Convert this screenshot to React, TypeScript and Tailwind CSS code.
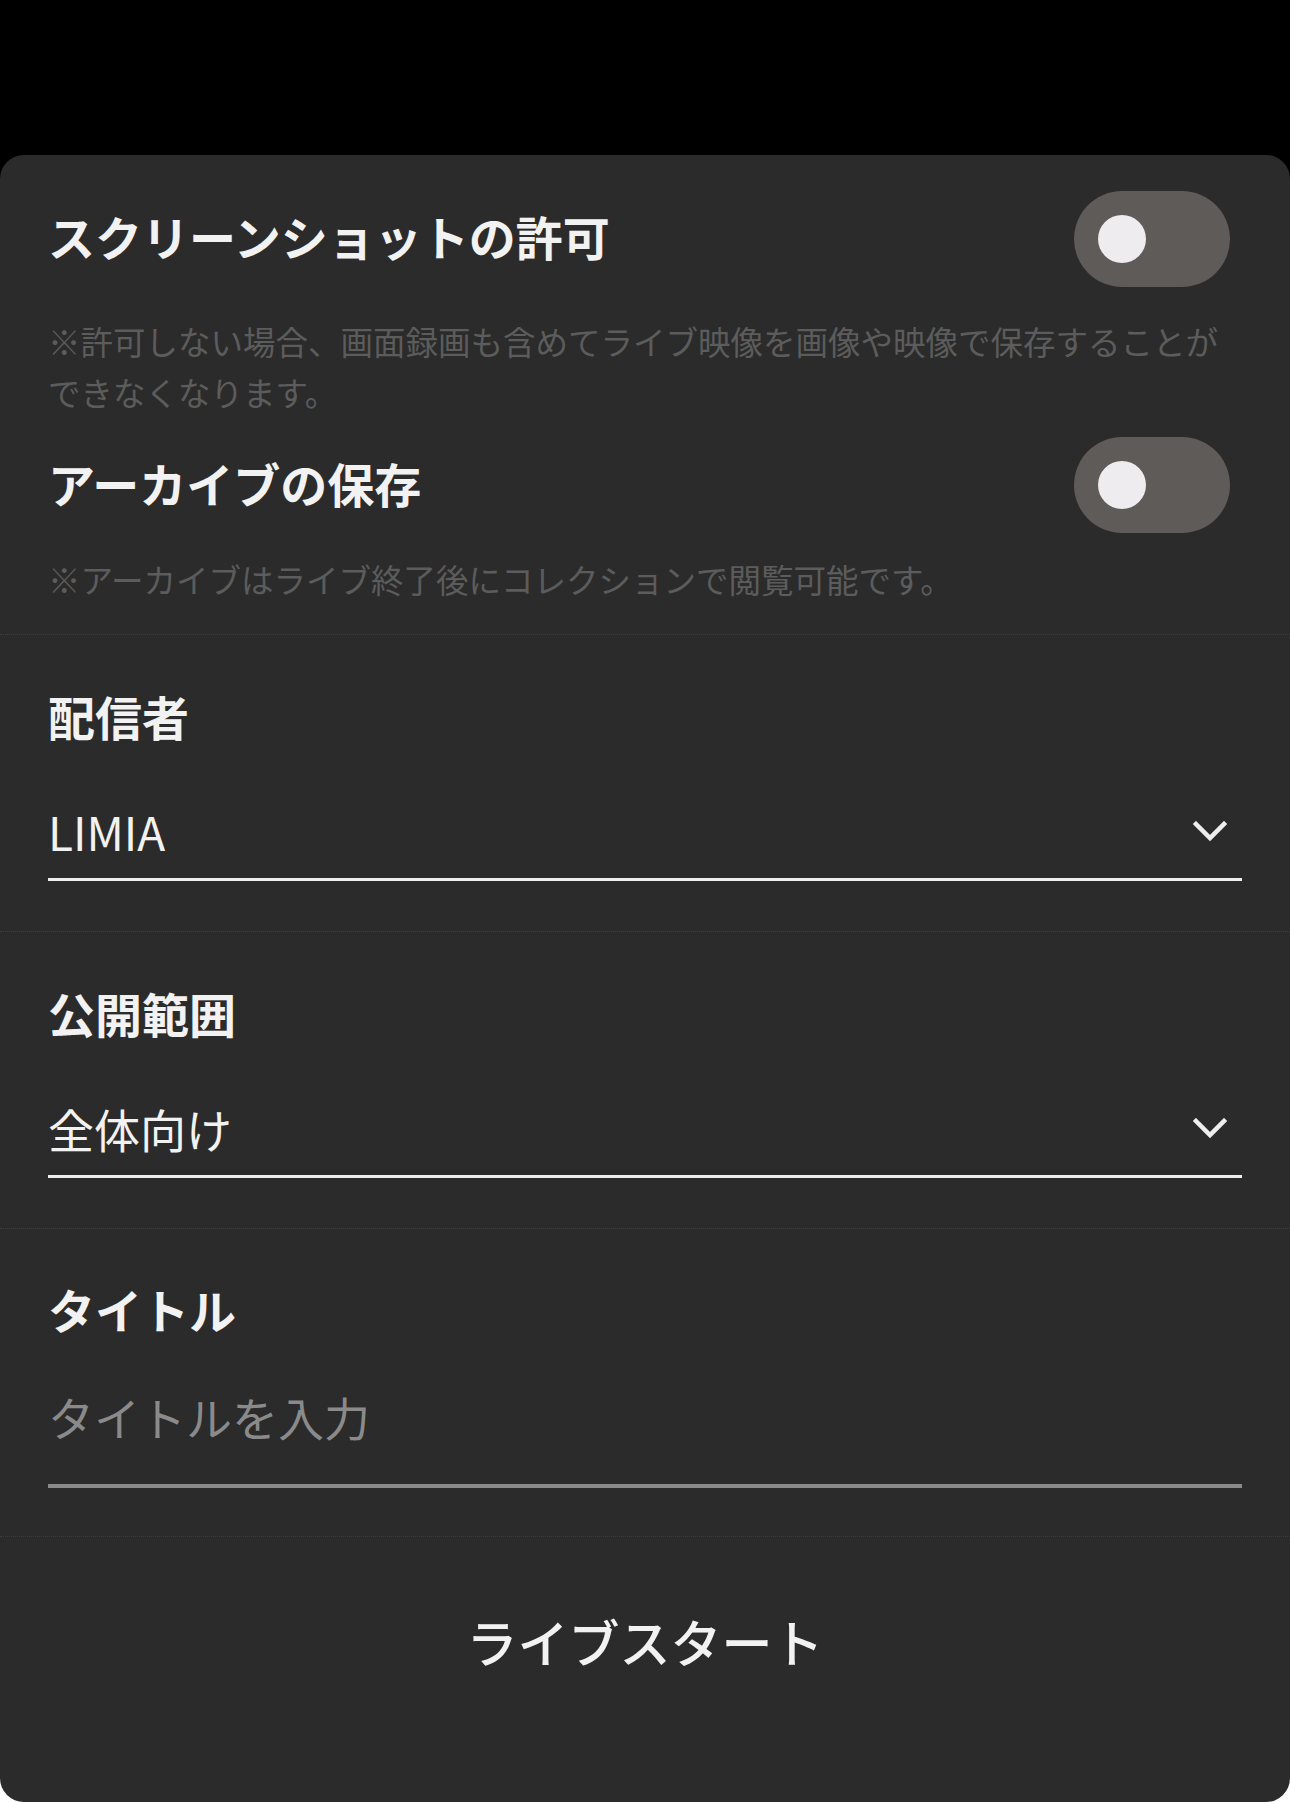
import React from "react";

// Live start settings sheet
const Divider = () => <div className="border-t border-dotted border-[#3d3d3d]" />;

function Toggle() {
  return (
    <div className="w-[156px] h-[96px] rounded-full bg-[#5e5b59] flex items-center pl-[24px] mr-[12px] shrink-0">
      <div className="w-[48px] h-[48px] rounded-full bg-[#eeecee]" />
    </div>
  );
}

function Chevron() {
  return (
    <svg width="34" height="21" viewBox="0 0 34 21" className="mr-[15px]">
      <polyline points="3,3 17,17 31,3" fill="none" stroke="#eeeeee" strokeWidth="4.5" strokeLinecap="square" />
    </svg>
  );
}

function SelectField({ label, value }: { label: string; value: string }) {
  return (
    <section className="px-[48px] pt-[51px] pb-[50px]">
      <h2 className="text-[47px] leading-[60px] font-bold text-[#f2f2f2]">{label}</h2>
      <div className="mt-[55px] flex items-center justify-between pb-[17px] border-b-[3px] border-[#eeeeee]">
        <span className="text-[46px] leading-[60px] text-[#f2f2f2]">{value}</span>
        <Chevron />
      </div>
    </section>
  );
}

export default function App() {
  return (
    <div className="h-[1802px] flex flex-col bg-[linear-gradient(to_bottom,#000_90%,#fff_90%)] font-['Noto_Sans_CJK_JP','Noto_Sans',sans-serif]">
      <div className="mt-[155px] flex-1 rounded-[24px] bg-[#2b2b2b] flex flex-col">
        <section className="px-[48px] pt-[36px] pb-[30px]">
          <div className="flex items-center justify-between">
            <h2 className="-mt-[6px] text-[47px] leading-[60px] font-bold text-[#f2f2f2]">スクリーンショットの許可</h2>
            <Toggle />
          </div>
          <p className="mt-[28px] w-[1180px] text-[32.5px] leading-[51px] text-[#5c5c5c]">
            ※許可しない場合、画面録画も含めてライブ映像を画像や映像で保存することができなくなります。
          </p>
          <div className="mt-[20px] flex items-center justify-between">
            <h2 className="-mt-[4px] text-[47px] leading-[60px] font-bold text-[#f2f2f2]">アーカイブの保存</h2>
            <Toggle />
          </div>
          <p className="mt-[20px] text-[32.5px] leading-[51px] text-[#5c5c5c]">
            ※アーカイブはライブ終了後にコレクションで閲覧可能です。
          </p>
        </section>
        <Divider />
        <SelectField label="配信者" value="LIMIA" />
        <Divider />
        <SelectField label="公開範囲" value="全体向け" />
        <Divider />
        <section className="px-[48px] pt-[50px] pb-[48px]">
          <h2 className="text-[47px] leading-[60px] font-bold text-[#f2f2f2]">タイトル</h2>
          <div className="mt-[47px] pb-[38px] border-b-[4px] border-[#8a8a8a]">
            <span className="text-[46px] leading-[60px] text-[#8a8a8a]">タイトルを入力</span>
          </div>
        </section>
        <Divider />
        <div className="flex-1 flex justify-center pt-[74px]">
          <button className="h-[60px] text-[51px] leading-[60px] font-medium text-[#f2f2f2]">ライブスタート</button>
        </div>
      </div>
    </div>
  );
}
